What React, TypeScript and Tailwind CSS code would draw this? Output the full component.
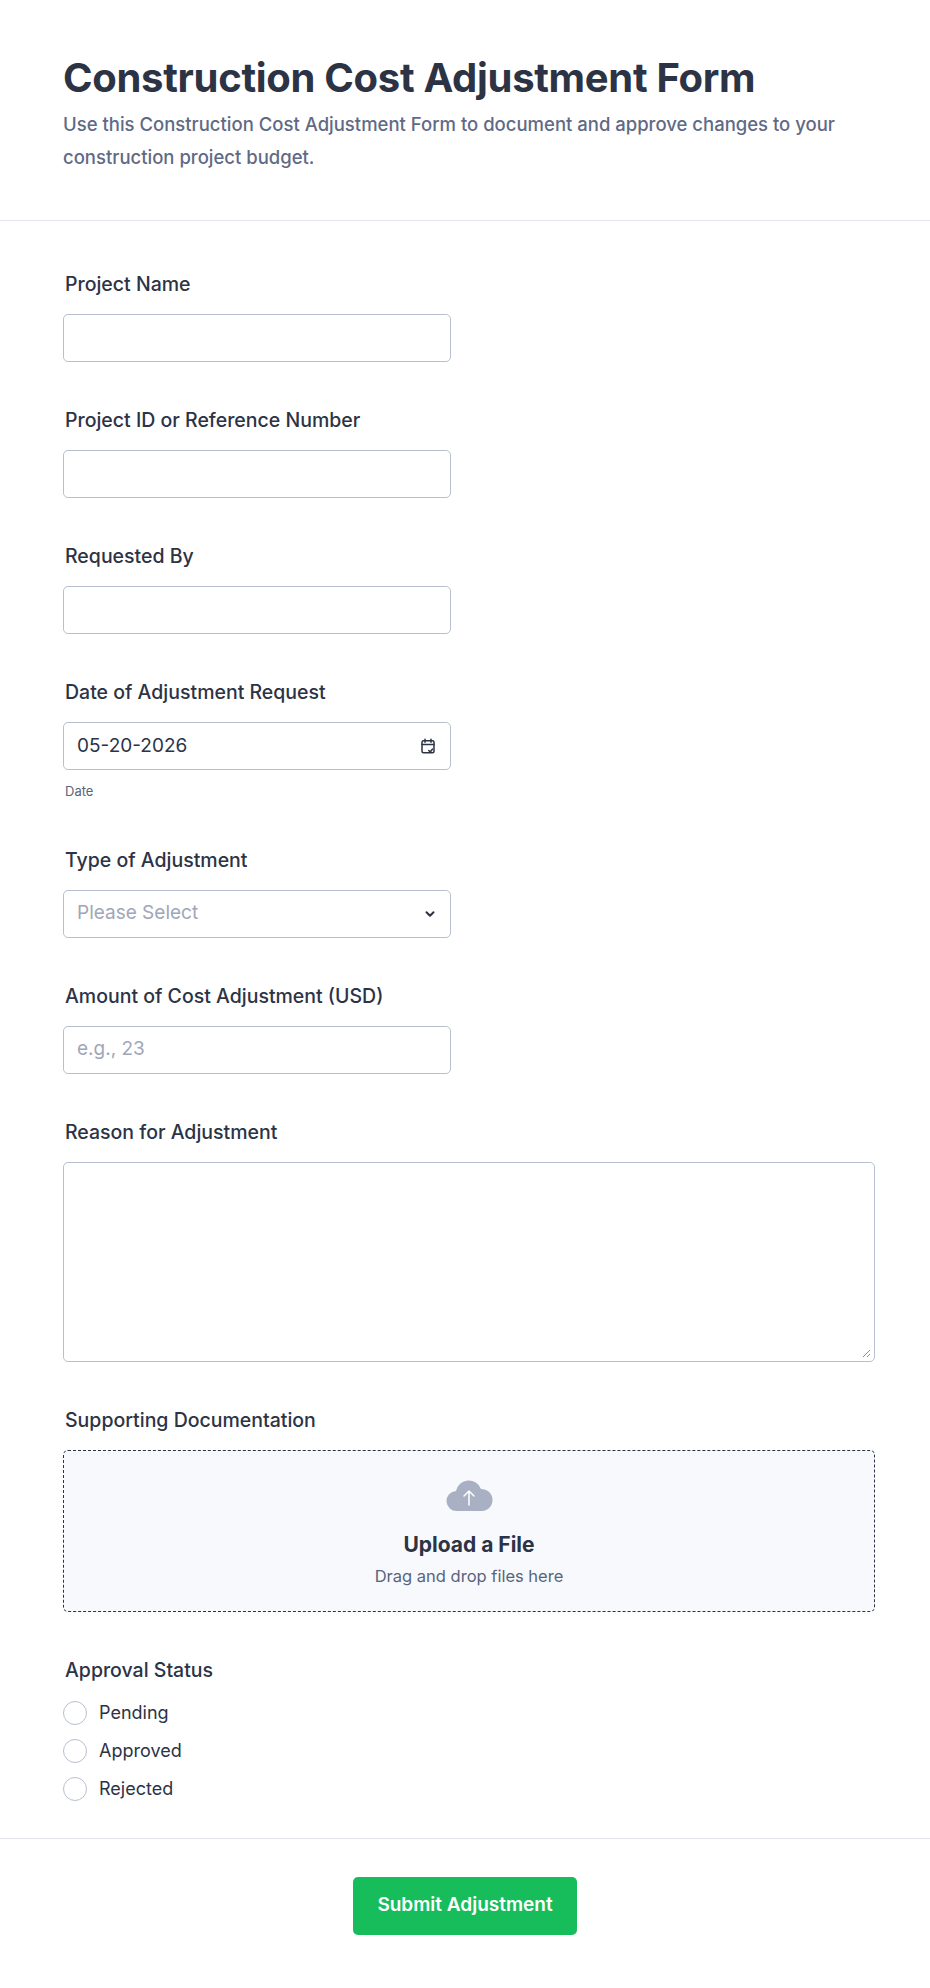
import React from 'react'

const font = { fontFamily: 'Inter, "Noto Sans", sans-serif' }

const Label = ({ children }: { children: React.ReactNode }) => (
  <label className="block text-[19.5px] font-medium text-[#2c3345] leading-[24px] mb-[18px] ml-[2px]">{children}</label>
)

const TextInput = ({ placeholder }: { placeholder?: string }) => (
  <div className="w-[388px] h-[48px] rounded-[5px] border border-[#b8bfcf] bg-white flex items-center px-[13px] text-[19px] text-[#a0a6b8]">
    {placeholder}
  </div>
)

const Radio = ({ text }: { text: string }) => (
  <div className="flex items-center gap-[12px] h-[38px]">
    <span className="w-[24px] h-[24px] rounded-full border border-[#b8bfcf] bg-white"></span>
    <span className="text-[18px] text-[#2c3345]">{text}</span>
  </div>
)

export default function App() {
  return (
    <div style={font} className="w-[930px] min-h-[1988px] bg-white">
      {/* header */}
      <div className="px-[63px] pt-[52px] pb-[46px] border-b border-[#e3e5ec]">
        <h1 className="text-[40px] font-bold text-[#2c3345] leading-[52px] tracking-[-0.3px]">Construction Cost Adjustment Form</h1>
        <p className="text-[18.5px] font-medium text-[#5f6a85] leading-[33px] mt-[4px] w-[790px]">
          Use this Construction Cost Adjustment Form to document and approve changes to your construction project budget.
        </p>
      </div>

      {/* fields */}
      <div className="px-[63px] pt-[51px] flex flex-col gap-[46px]">
        <div>
          <Label>Project Name</Label>
          <TextInput />
        </div>
        <div>
          <Label>Project ID or Reference Number</Label>
          <TextInput />
        </div>
        <div>
          <Label>Requested By</Label>
          <TextInput />
        </div>
        <div>
          <Label>Date of Adjustment Request</Label>
          <div className="w-[388px] h-[48px] rounded-[5px] border border-[#b8bfcf] flex items-center justify-between px-[13px]">
            <span className="text-[19px] text-[#2c3345]">05-20-2026</span>
            <svg width="18" height="18" viewBox="0 0 24 24" fill="none" stroke="#2c3345" strokeWidth="2" strokeLinecap="round" strokeLinejoin="round">
              <rect x="4" y="5" width="16" height="16" rx="2" />
              <path d="M4 10h16M8 3v4M16 3v4M13 18l2 2 3-4" />
            </svg>
          </div>
          <div className="text-[13px] text-[#57647e] mt-[12px] ml-[2px]">Date</div>
        </div>
        <div>
          <Label>Type of Adjustment</Label>
          <div className="w-[388px] h-[48px] rounded-[5px] border border-[#b8bfcf] flex items-center justify-between px-[13px]">
            <span className="text-[19px] text-[#a0a6b8]">Please Select</span>
            <svg width="14" height="14" viewBox="0 0 24 24" fill="none" stroke="#2c3345" strokeWidth="3.5" strokeLinecap="round" strokeLinejoin="round">
              <path d="M6 9l6 6 6-6" />
            </svg>
          </div>
        </div>
        <div>
          <Label>Amount of Cost Adjustment (USD)</Label>
          <TextInput placeholder="e.g., 23" />
        </div>
        <div>
          <Label>Reason for Adjustment</Label>
          <div className="w-[812px] h-[200px] rounded-[5px] border border-[#b8bfcf] relative">
            <svg className="absolute right-[3px] bottom-[3px]" width="10" height="10" viewBox="0 0 10 10" stroke="#8a8fa3">
              <path d="M9 2L2 9M9 6L6 9" />
            </svg>
          </div>
        </div>
        <div>
          <Label>Supporting Documentation</Label>
          <div className="w-[812px] h-[162px] rounded-[5px] border border-dashed border-[#2c3345] bg-[#f8f9fc] flex flex-col items-center pt-[26px]">
            <svg width="48" height="36" viewBox="0 0 48 36">
              <path d="M12 34a10 10 0 0 1-1-20A13 13 0 0 1 36 12a11 11 0 0 1 1 22z" fill="#a9b0c4" />
              <path d="M24 28V14M19 19l5-5 5 5" stroke="#fff" strokeWidth="1.5" fill="none" strokeLinecap="round" strokeLinejoin="round" />
            </svg>
            <div className="text-[21px] font-bold text-[#2c3345] mt-[16px]">Upload a File</div>
            <div className="text-[16.5px] text-[#57647e] mt-[4px]">Drag and drop files here</div>
          </div>
        </div>
        <div className="pb-[14px]">
          <label className="block text-[19.5px] font-medium text-[#2c3345] leading-[24px] mb-[12px] ml-[2px]">Approval Status</label>
          <Radio text="Pending" />
          <Radio text="Approved" />
          <Radio text="Rejected" />
        </div>
      </div>

      {/* footer */}
      <div className="border-t border-[#e3e5ec] mt-[16px] pt-[38px] flex justify-center">
        <button className="w-[224px] h-[58px] rounded-[5px] bg-[#18bd5b] text-white text-[19px] font-semibold">Submit Adjustment</button>
      </div>
    </div>
  )
}
